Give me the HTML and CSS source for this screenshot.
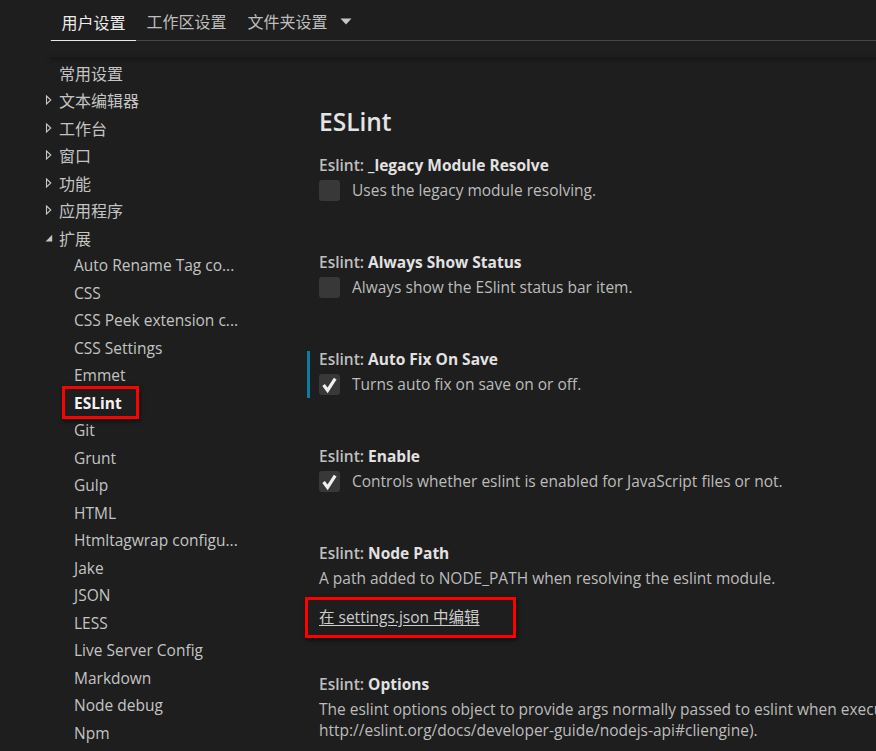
FILE: index.html
```html
<!DOCTYPE html>
<html lang="zh-CN">
<head>
<meta charset="utf-8">
<title>设置</title>
<link rel="stylesheet" href="styles.css">
</head>
<body>
<div class="page">
  <header class="header">
    <div class="tabs">
      <div class="tab active">用户设置</div>
      <div class="tab">工作区设置</div>
      <div class="tab folder">文件夹设置</div>
      <svg class="dropdown" width="12" height="7" viewBox="0 0 12 7"><polygon points="0.5,0.5 11.5,0.5 6,6.5" fill="#c5c5c5"/></svg>
    </div>
    <div class="shadow"></div>
  </header>
  <div class="content">
    <nav class="sidebar">
      <div class="row l1"><span class="tw"></span><span class="label cjk">常用设置</span></div>
      <div class="row l1"><svg class="tw" width="15" height="10" viewBox="0 0 15 10"><polygon points="2.5,1 6.8,5 2.5,9" fill="none" stroke="#c5c5c5" stroke-width="1.1"/></svg><span class="label cjk">文本编辑器</span></div>
      <div class="row l1"><svg class="tw" width="15" height="10" viewBox="0 0 15 10"><polygon points="2.5,1 6.8,5 2.5,9" fill="none" stroke="#c5c5c5" stroke-width="1.1"/></svg><span class="label cjk">工作台</span></div>
      <div class="row l1"><svg class="tw" width="15" height="10" viewBox="0 0 15 10"><polygon points="2.5,1 6.8,5 2.5,9" fill="none" stroke="#c5c5c5" stroke-width="1.1"/></svg><span class="label cjk">窗口</span></div>
      <div class="row l1"><svg class="tw" width="15" height="10" viewBox="0 0 15 10"><polygon points="2.5,1 6.8,5 2.5,9" fill="none" stroke="#c5c5c5" stroke-width="1.1"/></svg><span class="label cjk">功能</span></div>
      <div class="row l1"><svg class="tw" width="15" height="10" viewBox="0 0 15 10"><polygon points="2.5,1 6.8,5 2.5,9" fill="none" stroke="#c5c5c5" stroke-width="1.1"/></svg><span class="label cjk">应用程序</span></div>
      <div class="row l1"><svg class="tw" width="15" height="10" viewBox="0 0 15 10"><polygon points="8.2,1.8 8.2,8.6 1.6,8.6" fill="#c5c5c5"/></svg><span class="label cjk">扩展</span></div>
      <div class="row l2">Auto Rename Tag co...</div>
      <div class="row l2">CSS</div>
      <div class="row l2">CSS Peek extension c...</div>
      <div class="row l2">CSS Settings</div>
      <div class="row l2">Emmet</div>
      <div class="row l2 selected marked">ESLint</div>
      <div class="row l2">Git</div>
      <div class="row l2">Grunt</div>
      <div class="row l2">Gulp</div>
      <div class="row l2">HTML</div>
      <div class="row l2">Htmltagwrap configu...</div>
      <div class="row l2">Jake</div>
      <div class="row l2">JSON</div>
      <div class="row l2">LESS</div>
      <div class="row l2">Live Server Config</div>
      <div class="row l2">Markdown</div>
      <div class="row l2">Node debug</div>
      <div class="row l2">Npm</div>
    </nav>
    <main class="main">
      <h1 class="group-title">ESLint</h1>

      <section class="setting">
        <div class="title"><span class="cat">Eslint: </span><span class="name">_legacy Module Resolve</span></div>
        <div class="desc check-row"><span class="checkbox"></span><span>Uses the legacy module resolving.</span></div>
      </section>

      <section class="setting">
        <div class="title"><span class="cat">Eslint: </span><span class="name">Always Show Status</span></div>
        <div class="desc check-row"><span class="checkbox"></span><span>Always show the ESlint status bar item.</span></div>
      </section>

      <section class="setting modified">
        <div class="title"><span class="cat">Eslint: </span><span class="name">Auto Fix On Save</span></div>
        <div class="desc check-row"><span class="checkbox"><svg width="21" height="21" viewBox="0 0 21 21"><polyline points="4.6,11 8.6,16.4 16.2,4.6" fill="none" stroke="#f0f0f0" stroke-width="3.2" stroke-linejoin="miter"/></svg></span><span>Turns auto fix on save on or off.</span></div>
      </section>

      <section class="setting">
        <div class="title"><span class="cat">Eslint: </span><span class="name">Enable</span></div>
        <div class="desc check-row"><span class="checkbox"><svg width="21" height="21" viewBox="0 0 21 21"><polyline points="4.6,11 8.6,16.4 16.2,4.6" fill="none" stroke="#f0f0f0" stroke-width="3.2" stroke-linejoin="miter"/></svg></span><span>Controls whether eslint is enabled for JavaScript files or not.</span></div>
      </section>

      <section class="setting with-link">
        <div class="title"><span class="cat">Eslint: </span><span class="name">Node Path</span></div>
        <div class="desc">A path added to NODE_PATH when resolving the eslint module.</div>
        <div class="link-row"><a class="edit-link" href="#">在 settings.json 中编辑</a></div>
      </section>

      <section class="setting">
        <div class="title"><span class="cat">Eslint: </span><span class="name">Options</span></div>
        <div class="desc multi">The eslint options object to provide args normally passed to eslint when executed from a command line (see<br>http://eslint.org/docs/developer-guide/nodejs-api#cliengine).</div>
      </section>
    </main>
  </div>
</div>
</body>
</html>
```
FILE: styles.css
```css
html, body {
  margin: 0;
  padding: 0;
  background: #1e1e1e;
}
body {
  width: 876px;
  height: 751px;
  overflow: hidden;
  font-family: "Open Sans", "Noto Sans CJK SC", sans-serif;
  font-size: 15.5px;
  color: #c4c4c4;
}
.cjk {
  font-size: 16px;
}

/* header */
.header {
  margin-left: 50px;
}
.tabs {
  display: flex;
  align-items: flex-start;
  height: 40px;
  padding-left: 1px;
  border-bottom: 1px solid #454545;
}
.tab {
  box-sizing: border-box;
  height: 40px;
  padding: 2px 10.5px 0;
  display: flex;
  align-items: center;
  font-size: 16px;
  color: #bdbdbd;
}
.tab.active {
  height: 41px;
  padding-top: 3px;
  color: #ececec;
  border-bottom: 1px solid #e8e8e8;
}
.dropdown {
  margin-left: 2px;
  margin-top: 18px;
}
.shadow {
  margin-top: 17px;
  height: 0;
  border-top: 1px solid #141414;
  box-shadow: 0 1px 4px rgba(0, 0, 0, 0.7);
}

/* layout */
.content {
  display: flex;
}
.sidebar {
  box-sizing: border-box;
  width: 295px;
  flex: none;
  padding-left: 44px;
}
.row {
  height: 27.5px;
  display: flex;
  align-items: center;
  white-space: nowrap;
  color: #c4c4c4;
}
.row .tw {
  width: 15px;
  height: 10px;
  flex: none;
  display: block;
}
.row.l2 {
  padding-left: 30px;
}
.row.selected {
  color: #f2f2f2;
  font-weight: 700;
}
.row.marked {
  position: relative;
}
.row.marked::after {
  content: "";
  position: absolute;
  left: 18px;
  top: -3px;
  width: 77px;
  height: 33px;
  box-sizing: border-box;
  border: 3px solid #ff0000;
  box-shadow: 1px 2px 4px rgba(0, 0, 0, 0.6);
}

.main {
  flex: 1;
  padding: 45px 0 0 12px;
  white-space: nowrap;
}
.group-title {
  margin: 0 0 13px 12px;
  font-size: 24.5px;
  line-height: 36px;
  font-weight: 600;
  color: #e4e4e4;
}
.setting {
  position: relative;
  padding: 0 0 48px 12px;
}
.setting.modified::before {
  content: "";
  position: absolute;
  left: 0;
  top: 4px;
  width: 3px;
  height: 47px;
  background: #0c7d9d;
}
.title {
  line-height: 24px;
}
.cat {
  font-weight: 600;
  color: #bfbfbf;
}
.name {
  font-weight: 700;
  color: #e2e2e2;
}
.desc {
  margin-top: 1px;
  line-height: 24px;
  color: #bcbcbc;
}
.desc.multi {
  line-height: 21px;
  padding-top: 2px;
}
.check-row {
  display: flex;
  align-items: center;
  height: 24px;
}
.checkbox {
  width: 21px;
  height: 21px;
  flex: none;
  margin-right: 12px;
  border-radius: 3px;
  background: #383838;
}
.checkbox svg {
  display: block;
}
.setting.with-link {
  padding-bottom: 43px;
}
.link-row {
  position: relative;
  margin-top: 15px;
  line-height: 24px;
}
.edit-link {
  position: relative;
  color: #cccccc;
  text-decoration: underline;
  text-underline-offset: 2px;
}
.edit-link::after {
  content: "";
  position: absolute;
  left: -14px;
  top: -9px;
  width: 211px;
  height: 41px;
  box-sizing: border-box;
  border: 3px solid #ff0000;
  box-shadow: 1px 2px 4px rgba(0, 0, 0, 0.6);
}
```
